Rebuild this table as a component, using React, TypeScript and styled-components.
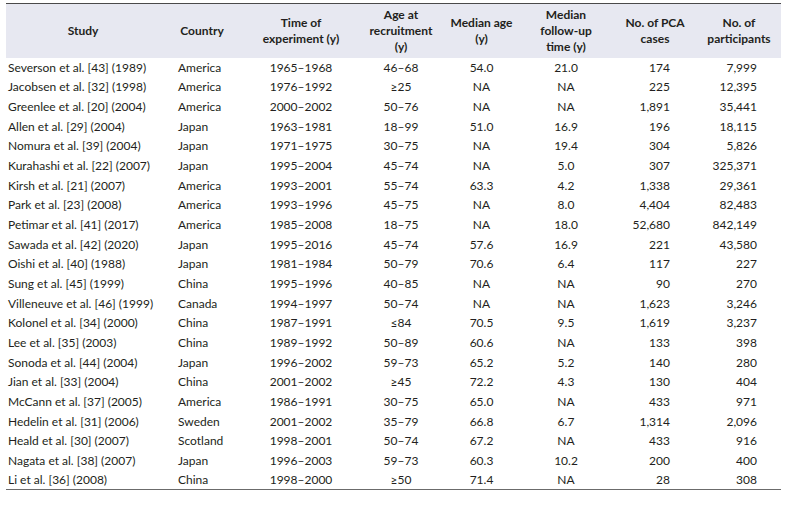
import React from "react";
import styled, { createGlobalStyle } from "styled-components";

const Global = createGlobalStyle`
  html, body { margin: 0; padding: 0; background: #ffffff; }
  body { font-family: "Lato", "Liberation Sans", sans-serif; color: #231f20; }
`;

const Wrap = styled.div`
  padding: 3px 6px 0 6px;
`;

const Table = styled.table`
  width: 775px;
  border-collapse: collapse;
  table-layout: fixed;
  font-size: 12px;
  border-top: 1.5px solid #4a4a4a;
  border-bottom: 1px solid #6b6b6b;
`;

const HeadRow = styled.tr`
  background: #e7e8f1;
  height: 54px;
`;

const Th = styled.th`
  font-weight: 700;
  text-align: center;
  line-height: 16px;
  padding: 0 2px;
  vertical-align: middle;
`;

const Tr = styled.tr`
  height: 19.67px;
`;

type Align = "left" | "center" | "right";

const Td = styled.td<{ $align: Align; $pl?: number; $pr?: number }>`
  text-align: ${(p) => p.$align};
  padding: 0 ${(p) => p.$pr ?? 0}px 0 ${(p) => p.$pl ?? 0}px;
  white-space: nowrap;
  line-height: 19px;
`;

const widths = [154, 84, 114, 86, 75, 94, 84, 84];

const rows: string[][] = [
  ["Severson et al. [43] (1989)", "America", "1965–1968", "46–68", "54.0", "21.0", "174", "7,999"],
  ["Jacobsen et al. [32] (1998)", "America", "1976–1992", "≥25", "NA", "NA", "225", "12,395"],
  ["Greenlee et al. [20] (2004)", "America", "2000–2002", "50–76", "NA", "NA", "1,891", "35,441"],
  ["Allen et al. [29] (2004)", "Japan", "1963–1981", "18–99", "51.0", "16.9", "196", "18,115"],
  ["Nomura et al. [39] (2004)", "Japan", "1971–1975", "30–75", "NA", "19.4", "304", "5,826"],
  ["Kurahashi et al. [22] (2007)", "Japan", "1995–2004", "45–74", "NA", "5.0", "307", "325,371"],
  ["Kirsh et al. [21] (2007)", "America", "1993–2001", "55–74", "63.3", "4.2", "1,338", "29,361"],
  ["Park et al. [23] (2008)", "America", "1993–1996", "45–75", "NA", "8.0", "4,404", "82,483"],
  ["Petimar et al. [41] (2017)", "America", "1985–2008", "18–75", "NA", "18.0", "52,680", "842,149"],
  ["Sawada et al. [42] (2020)", "Japan", "1995–2016", "45–74", "57.6", "16.9", "221", "43,580"],
  ["Oishi et al. [40] (1988)", "Japan", "1981–1984", "50–79", "70.6", "6.4", "117", "227"],
  ["Sung et al. [45] (1999)", "China", "1995–1996", "40–85", "NA", "NA", "90", "270"],
  ["Villeneuve et al. [46] (1999)", "Canada", "1994–1997", "50–74", "NA", "NA", "1,623", "3,246"],
  ["Kolonel et al. [34] (2000)", "China", "1987–1991", "≤84", "70.5", "9.5", "1,619", "3,237"],
  ["Lee et al. [35] (2003)", "China", "1989–1992", "50–89", "60.6", "NA", "133", "398"],
  ["Sonoda et al. [44] (2004)", "Japan", "1996–2002", "59–73", "65.2", "5.2", "140", "280"],
  ["Jian et al. [33] (2004)", "China", "2001–2002", "≥45", "72.2", "4.3", "130", "404"],
  ["McCann et al. [37] (2005)", "America", "1986–1991", "30–75", "65.0", "NA", "433", "971"],
  ["Hedelin et al. [31] (2006)", "Sweden", "2001–2002", "35–79", "66.8", "6.7", "1,314", "2,096"],
  ["Heald et al. [30] (2007)", "Scotland", "1998–2001", "50–74", "67.2", "NA", "433", "916"],
  ["Nagata et al. [38] (2007)", "Japan", "1996–2003", "59–73", "60.3", "10.2", "200", "400"],
  ["Li et al. [36] (2008)", "China", "1998–2000", "≥50", "71.4", "NA", "28", "308"],
];

const cellProps: { $align: Align; $pl?: number; $pr?: number }[] = [
  { $align: "left", $pl: 2 },
  { $align: "left", $pl: 18 },
  { $align: "center" },
  { $align: "center" },
  { $align: "center" },
  { $align: "center" },
  { $align: "right", $pr: 27 },
  { $align: "right", $pr: 24 },
];

const headers: React.ReactNode[] = [
  "Study",
  "Country",
  <>Time of<br />experiment (y)</>,
  <>Age at<br />recruitment<br />(y)</>,
  <>Median age<br />(y)</>,
  <>Median<br />follow-up<br />time (y)</>,
  <>No. of PCA<br />cases</>,
  <>No. of<br />participants</>,
];

export default function App() {
  return (
    <Wrap>
      <Global />
      <Table>
        <colgroup>
          {widths.map((w, i) => (
            <col key={i} style={{ width: w }} />
          ))}
        </colgroup>
        <thead>
          <HeadRow>
            {headers.map((h, i) => (
              <Th key={i}>{h}</Th>
            ))}
          </HeadRow>
        </thead>
        <tbody>
          {rows.map((r, ri) => (
            <Tr key={ri}>
              {r.map((c, ci) => (
                <Td key={ci} {...cellProps[ci]}>
                  {c}
                </Td>
              ))}
            </Tr>
          ))}
        </tbody>
      </Table>
    </Wrap>
  );
}
